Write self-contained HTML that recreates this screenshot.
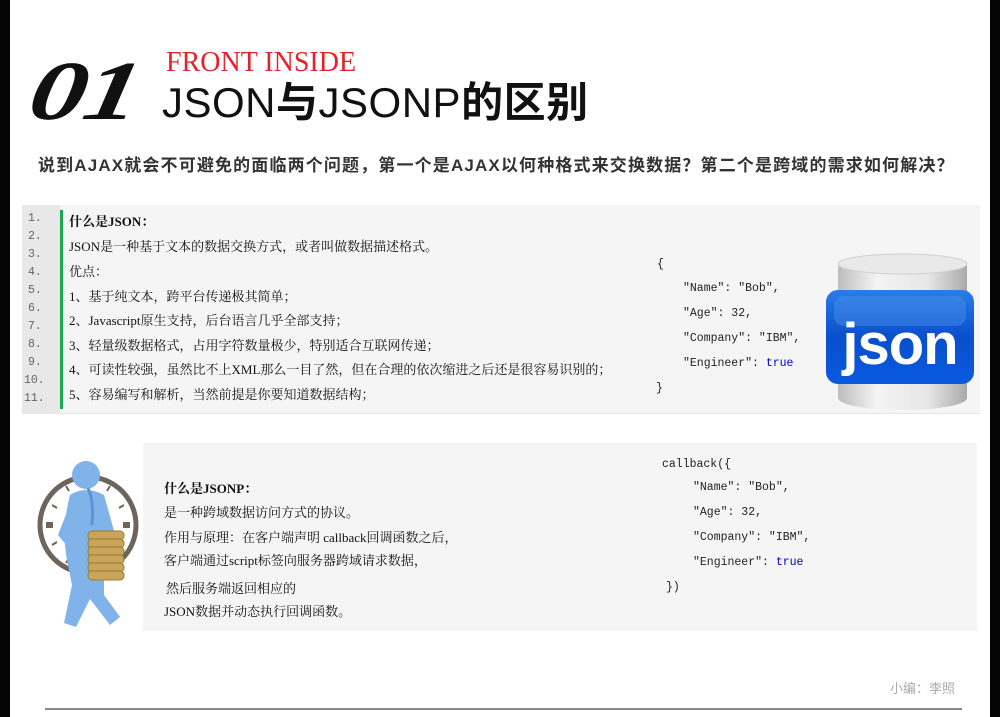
<!DOCTYPE html>
<html><head><meta charset="utf-8"><style>
*{margin:0;padding:0;box-sizing:border-box}
body{width:1000px;height:717px;background:#fff;position:relative;overflow:hidden;font-family:"Liberation Serif","Noto Serif CJK SC",serif}
.a{position:absolute;white-space:nowrap}
.t{font-size:13px;color:#111;line-height:16px}
.c{font-family:"Liberation Mono",monospace;font-size:11.5px;color:#222;line-height:14px}
.tr{color:#00c}
.ln{font-family:"Liberation Mono",monospace;font-size:11.5px;color:#666;left:28px}
</style></head><body>
<div class="a" style="left:0;top:0;width:10px;height:717px;background:#050505"></div>
<div class="a" style="left:990px;top:0;width:10px;height:717px;background:#050505"></div>

<div class="a" style="left:40px;top:44px;font-family:'Liberation Serif',serif;font-style:italic;font-weight:bold;font-size:84px;line-height:96px;color:#111;letter-spacing:-2px;transform:scaleX(1.35) skewX(-8deg);transform-origin:left top">01</div>
<div class="a" style="left:166px;top:47px;font-family:'Liberation Serif',serif;font-size:28px;line-height:32px;color:#e3232b">FRONT INSIDE</div>
<div class="a" style="left:162px;top:78px;font-family:'Liberation Sans','Noto Sans CJK SC',sans-serif;font-size:42px;line-height:50px;color:#111;letter-spacing:0.5px"><span>JSON</span><b>与</b><span>JSONP</span><b>的区别</b></div>
<div class="a" style="left:38px;top:155px;font-family:'Liberation Sans','Noto Sans CJK SC',sans-serif;font-weight:bold;font-size:17px;line-height:22px;color:#333;letter-spacing:1.15px">说到AJAX就会不可避免的面临两个问题，第一个是AJAX以何种格式来交换数据？第二个是跨域的需求如何解决？</div>

<div class="a" style="left:22px;top:205px;width:958px;height:209px;background:#f5f5f5;border-bottom:1px solid #e4e4e4"></div>
<div class="a" style="left:22px;top:205px;width:38px;height:209px;background:#e8e8e8"></div>
<div class="a" style="left:60px;top:210px;width:3px;height:199px;background:#1aa94c"></div>
<div class="a ln" style="top:212px">1.</div>
<div class="a ln" style="top:230px">2.</div>
<div class="a ln" style="top:248px">3.</div>
<div class="a ln" style="top:266px">4.</div>
<div class="a ln" style="top:284px">5.</div>
<div class="a ln" style="top:302px">6.</div>
<div class="a ln" style="top:320px">7.</div>
<div class="a ln" style="top:338px">8.</div>
<div class="a ln" style="top:356px">9.</div>
<div class="a ln" style="top:374px;left:24px">10.</div>
<div class="a ln" style="top:392px;left:24px">11.</div>

<div class="a t" style="left:69px;top:214px;font-weight:bold">什么是JSON：</div>
<div class="a t" style="left:69px;top:239px">JSON是一种基于文本的数据交换方式，或者叫做数据描述格式。</div>
<div class="a t" style="left:69px;top:264px">优点：</div>
<div class="a t" style="left:69px;top:289px">1、基于纯文本，跨平台传递极其简单；</div>
<div class="a t" style="left:69px;top:313px">2、Javascript原生支持，后台语言几乎全部支持；</div>
<div class="a t" style="left:69px;top:338px">3、轻量级数据格式，占用字符数量极少，特别适合互联网传递；</div>
<div class="a t" style="left:69px;top:362px">4、可读性较强，虽然比不上XML那么一目了然，但在合理的依次缩进之后还是很容易识别的；</div>
<div class="a t" style="left:69px;top:387px">5、容易编写和解析，当然前提是你要知道数据结构；</div>

<div class="a c" style="left:657px;top:258px">{</div>
<div class="a c" style="left:683px;top:282px">"Name": "Bob",</div>
<div class="a c" style="left:683px;top:307px">"Age": 32,</div>
<div class="a c" style="left:683px;top:332px">"Company": "IBM",</div>
<div class="a c" style="left:683px;top:357px">"Engineer": <span class="tr">true</span></div>
<div class="a c" style="left:656px;top:382px">}</div>

<svg class="a" style="left:820px;top:250px" width="160" height="165" viewBox="0 0 160 165">
<defs>
<linearGradient id="cy" x1="0" x2="1"><stop offset="0" stop-color="#bdbdbd"/><stop offset=".3" stop-color="#f4f4f4"/><stop offset=".7" stop-color="#e6e6e6"/><stop offset="1" stop-color="#a9a9a9"/></linearGradient>
<linearGradient id="bl" x1="0" y1="0" x2="0" y2="1"><stop offset="0" stop-color="#2a7de6"/><stop offset=".5" stop-color="#0a4fcc"/><stop offset="1" stop-color="#0a5ae0"/></linearGradient>
</defs>
<path d="M18 14 V148 A64 12 0 0 0 147 148 V14 Z" fill="url(#cy)"/>
<ellipse cx="82.5" cy="14" rx="64.5" ry="10" fill="#e9e9e9" stroke="#d0d0d0"/>
<rect x="6" y="40" width="148" height="94" rx="12" fill="url(#bl)"/>
<rect x="14" y="46" width="132" height="30" rx="10" fill="#5a9cf0" opacity=".35"/>
<text x="80" y="114" text-anchor="middle" font-family="Liberation Sans,sans-serif" font-weight="bold" font-size="58" fill="#fff" letter-spacing="-1">json</text>
</svg>

<div class="a" style="left:143px;top:443px;width:834px;height:188px;background:#f5f5f5"></div>
<div class="a t" style="left:164px;top:481px;font-weight:bold">什么是JSONP：</div>
<div class="a t" style="left:164px;top:505px">是一种跨域数据访问方式的协议。</div>
<div class="a t" style="left:164px;top:530px">作用与原理：在客户端声明 callback回调函数之后，</div>
<div class="a t" style="left:164px;top:553px">客户端通过script标签向服务器跨域请求数据，</div>
<div class="a t" style="left:166px;top:581px">然后服务端返回相应的</div>
<div class="a t" style="left:164px;top:604px">JSON数据并动态执行回调函数。</div>

<div class="a c" style="left:662px;top:458px">callback({</div>
<div class="a c" style="left:693px;top:481px">"Name": "Bob",</div>
<div class="a c" style="left:693px;top:506px">"Age": 32,</div>
<div class="a c" style="left:693px;top:531px">"Company": "IBM",</div>
<div class="a c" style="left:693px;top:556px">"Engineer": <span class="tr">true</span></div>
<div class="a c" style="left:666px;top:581px">})</div>

<svg class="a" style="left:30px;top:455px" width="115" height="180" viewBox="0 0 115 180">
<circle cx="58" cy="70" r="48" fill="#fff" stroke="#6d645c" stroke-width="5"/>
<rect x="16" y="67" width="7" height="6" fill="#6d645c"/><rect x="93" y="67" width="7" height="6" fill="#6d645c"/>
<g stroke="#6d645c" stroke-width="2"><line x1="36" y1="31" x2="39" y2="36"/><line x1="80" y1="31" x2="77" y2="36"/><line x1="22" y1="50" x2="27" y2="53"/><line x1="94" y1="50" x2="89" y2="53"/><line x1="22" y1="90" x2="27" y2="87"/><line x1="36" y1="108" x2="39" y2="103"/></g>
<g fill="#7fb3ea">
<circle cx="56" cy="20" r="14"/>
<path d="M40 40 Q56 30 74 40 L88 90 L90 112 L80 114 L74 100 L74 140 L90 162 L80 170 L60 144 L46 172 L34 168 L42 130 L36 100 Q32 70 40 40Z"/>
<path d="M42 44 L28 80 L48 104 L54 96 L40 78 Z"/>
</g>
<path d="M58 33 Q64 45 62 70" stroke="#5b95d6" stroke-width="3" fill="none"/>
<g fill="#c9a55a" stroke="#9d7b35" stroke-width="1">
<rect x="58" y="76" width="36" height="9" rx="4"/><rect x="58" y="84" width="36" height="9" rx="4"/><rect x="58" y="92" width="36" height="9" rx="4"/><rect x="58" y="100" width="36" height="9" rx="4"/><rect x="58" y="108" width="36" height="9" rx="4"/><rect x="58" y="116" width="36" height="9" rx="4"/>
</g>
</svg>

<div class="a" style="left:890px;top:678px;font-family:'Liberation Sans','Noto Sans CJK SC',sans-serif;font-size:13px;color:#aaa">小编：李照</div>
<div class="a" style="left:45px;top:708px;width:917px;height:2px;background:#8a8a8a"></div>
</body></html>
